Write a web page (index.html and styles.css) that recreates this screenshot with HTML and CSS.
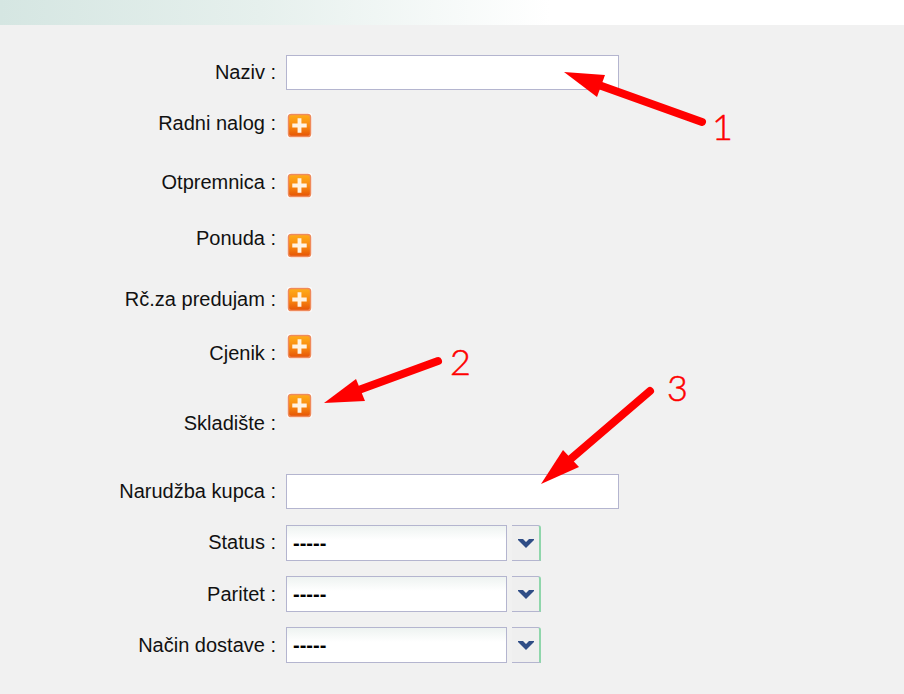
FILE: index.html
```html
<!DOCTYPE html>
<html lang="hr">
<head>
    <meta charset="UTF-8">
    <meta name="viewport" content="width=device-width, initial-scale=1.0">
    <title>Dokument</title>
    <link rel="stylesheet" href="styles.css">
</head>
<body>
    <svg width="0" height="0" class="defs">
        <defs>
            <linearGradient id="orange" x1="0" y1="0" x2="0" y2="1">
                <stop offset="0" stop-color="#ffae1a"/>
                <stop offset="0.55" stop-color="#f8860e"/>
                <stop offset="1" stop-color="#e55205"/>
            </linearGradient>
            <symbol id="plus" viewBox="0 0 26 26">
                <rect x="0" y="0" width="26" height="26" rx="2" fill="#fff" fill-opacity="0.75"/>
                <rect x="1.5" y="1.5" width="23" height="23" rx="3" fill="url(#orange)" stroke="#ee8a5c" stroke-width="1.5"/>
                <path d="M11 5.5h4V11h5.5v4H15v5.5h-4V15H5.5v-4H11z" fill="#fff3e2"/>
            </symbol>
        </defs>
    </svg>

    <div class="top-bar"></div>

    <form class="doc-form">
        <label class="lbl lbl-7">Naziv :</label>
        <div><input type="text" class="txt"></div>

        <label class="lbl lbl-1">Radni nalog :</label>
        <div><svg class="add"><use href="#plus"/></svg></div>

        <label class="lbl">Otpremnica :</label>
        <div><svg class="add"><use href="#plus"/></svg></div>

        <label class="lbl">Ponuda :</label>
        <div class="add-down"><svg class="add"><use href="#plus"/></svg></div>

        <label class="lbl lbl-3">Rč.za predujam :</label>
        <div><svg class="add"><use href="#plus"/></svg></div>

        <label class="lbl lbl-10">Cjenik :</label>
        <div><svg class="add"><use href="#plus"/></svg></div>

        <label class="lbl lbl-21">Skladište :</label>
        <div><svg class="add"><use href="#plus"/></svg></div>

        <label class="lbl lbl-7">Narudžba kupca :</label>
        <div><input type="text" class="txt"></div>

        <label class="lbl lbl-7">Status :</label>
        <div class="combo">
            <div class="combo-val">-----</div>
            <div class="combo-btn"><svg width="16" height="9" viewBox="0 0 16 9"><path d="M0 0h5l3 3 3-3h5v1L8 9 0 1z" fill="#2f4d86"/></svg></div>
        </div>

        <label class="lbl lbl-8">Paritet :</label>
        <div class="combo">
            <div class="combo-val">-----</div>
            <div class="combo-btn"><svg width="16" height="9" viewBox="0 0 16 9"><path d="M0 0h5l3 3 3-3h5v1L8 9 0 1z" fill="#2f4d86"/></svg></div>
        </div>

        <label class="lbl lbl-8">Način dostave :</label>
        <div class="combo">
            <div class="combo-val">-----</div>
            <div class="combo-btn"><svg width="16" height="9" viewBox="0 0 16 9"><path d="M0 0h5l3 3 3-3h5v1L8 9 0 1z" fill="#2f4d86"/></svg></div>
        </div>
    </form>

    <!-- Annotations drawn over the form -->
    <svg class="notes" width="904" height="694" viewBox="0 0 904 694">
        <g class="arrow">
            <line x1="702" y1="122" x2="596" y2="84"/>
            <polygon points="564,72 605,75 597,97"/>
            <line x1="438" y1="361" x2="356" y2="391"/>
            <polygon points="324,403 356,379 365,401"/>
            <line x1="650" y1="391" x2="566" y2="463"/>
            <polygon points="541,484 563,450 579,467"/>
        </g>
        <text x="712" y="140" class="num">1</text>
        <text x="450" y="375" class="num">2</text>
        <text x="667" y="401" class="num">3</text>
    </svg>
</body>
</html>
```

FILE: styles.css
```css
html, body {
    margin: 0;
    height: 100%;
    background: #f1f1f1;
}
body {
    position: relative;
    overflow: hidden;
    font-family: "Liberation Sans", Arial, sans-serif;
    font-size: 20px;
    color: #111;
}
.defs {
    position: absolute;
}
.top-bar {
    height: 25px;
    background: linear-gradient(to right, #d5e6e2 0, #e6f0ed 260px, #ffffff 550px);
}
.doc-form {
    display: grid;
    grid-template-columns: 276px 1fr;
    grid-template-rows: 57px 60px 56px 58px 47px 59px 82px 51px 51px 51px auto;
    column-gap: 10px;
    padding-top: 30px;
}
.lbl {
    text-align: right;
    line-height: 20px;
    white-space: nowrap;
}
/* Labels do not line up with their field in the old table, offsets per row */
.lbl-1 { padding-top: 1px; }
.lbl-3 { padding-top: 3px; }
.lbl-7 { padding-top: 7px; }
.lbl-8 { padding-top: 8px; }
.lbl-10 { padding-top: 10px; }
.lbl-21 { padding-top: 21px; }

.txt {
    display: block;
    box-sizing: border-box;
    width: 333px;
    height: 35px;
    margin: 0;
    padding: 0 6px;
    border: 1px solid #b4b5cf;
    background: #fff;
    outline: none;
}
.add {
    display: block;
    width: 25px;
    height: 25px;
    margin: 1px 0 0 1px;
}
.add-down {
    padding-top: 4px;
}
.combo {
    display: flex;
    align-items: flex-start;
    gap: 5px;
}
.combo-val {
    box-sizing: border-box;
    width: 221px;
    height: 36px;
    padding-left: 6px;
    border: 1px solid #b4b5cf;
    background: linear-gradient(to bottom, #eef3f1 0, #ffffff 14px);
    font-size: 20px;
    font-weight: bold;
    line-height: 35px;
    color: #000;
}
.combo-btn {
    box-sizing: border-box;
    display: flex;
    align-items: center;
    justify-content: center;
    width: 29px;
    height: 36px;
    border-top: 1px solid #b4b5cf;
    border-bottom: 1px solid #b4b5cf;
    border-right: 2px solid #8fd6ab;
    border-top-right-radius: 3px;
    background: #efefef;
}
.notes {
    position: absolute;
    top: 0;
    left: 0;
}
.arrow line {
    stroke: #ff0000;
    stroke-width: 8;
    stroke-linecap: round;
}
.arrow polygon {
    fill: #ff0000;
}
.num {
    font-family: Lato, sans-serif;
    font-weight: 300;
    font-size: 36px;
    fill: #ff0000;
    stroke: #ff0000;
    stroke-width: 0.5;
}
```
